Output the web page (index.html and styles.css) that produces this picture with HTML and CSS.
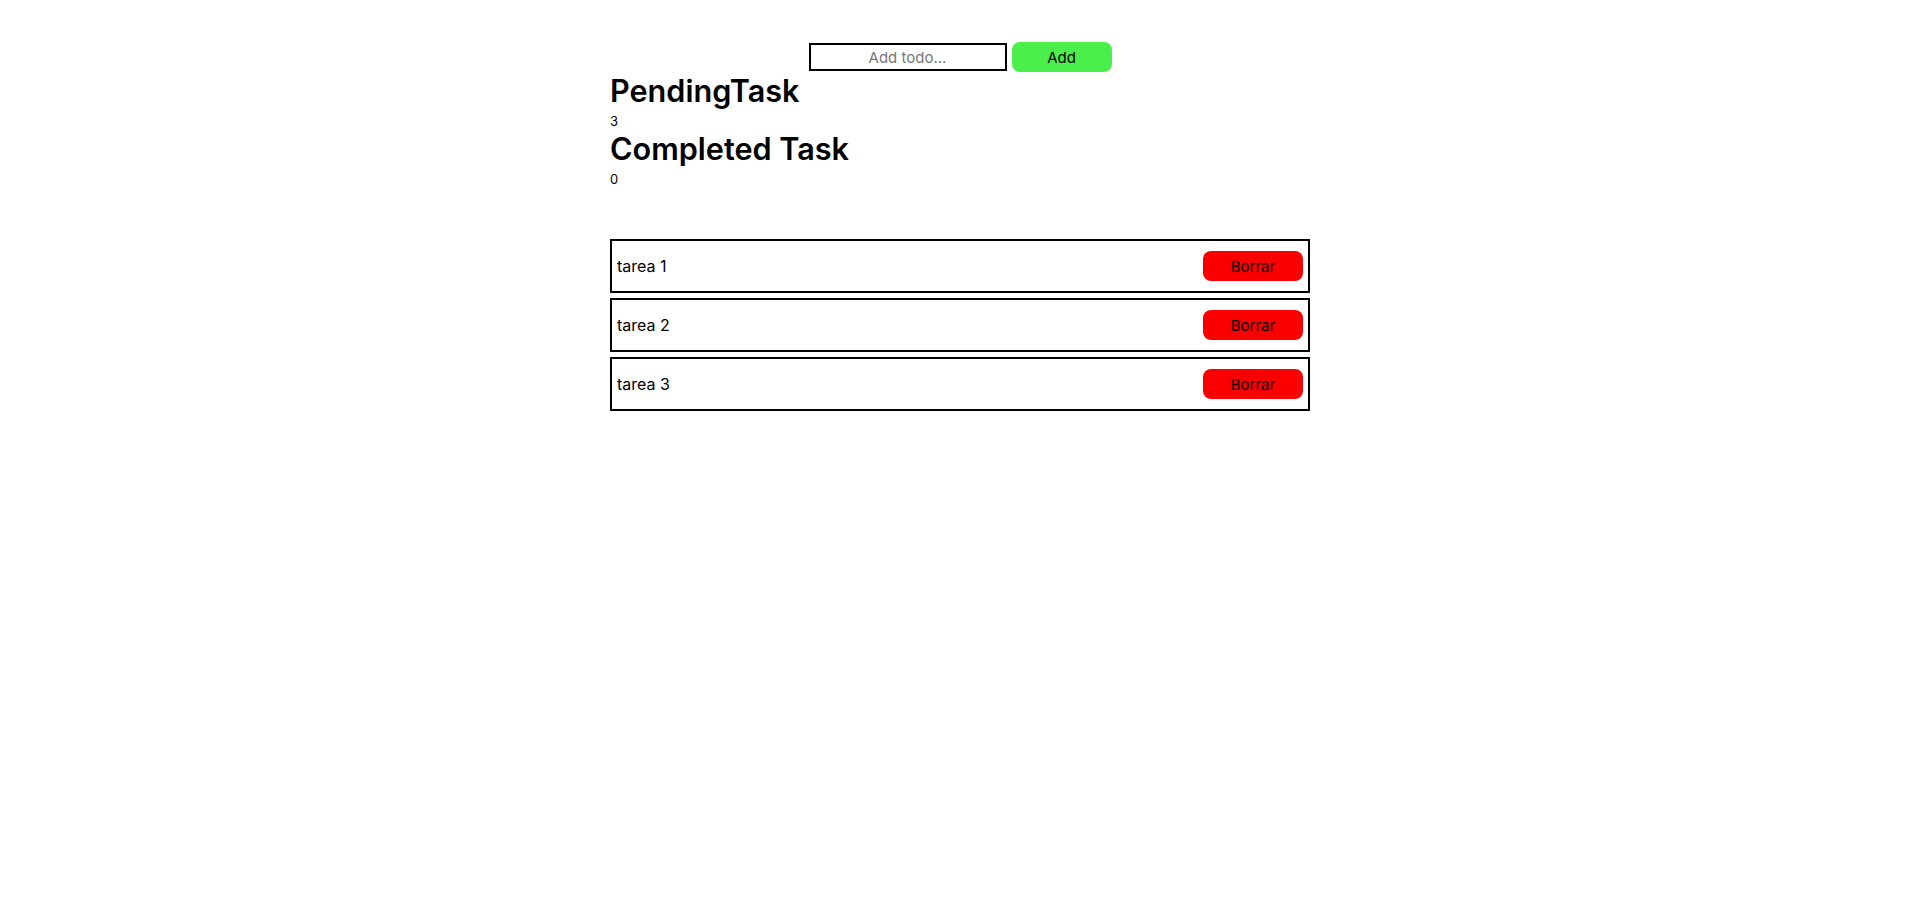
FILE: index.html
```html
<!DOCTYPE html>
<html lang="es">
<head>
<meta charset="utf-8">
<title>Todo</title>
<link rel="stylesheet" href="styles.css">
</head>
<body>
<div class="app">
  <form class="todo-form">
    <input class="todo-input" type="text" placeholder="Add todo...">
    <button class="btn-add" type="button">Add</button>
  </form>
  <h1 class="stat-title">PendingTask</h1>
  <p class="stat-value">3</p>
  <h1 class="stat-title">Completed Task</h1>
  <p class="stat-value">0</p>
  <ul class="todo-list">
    <li class="todo-item"><span class="todo-text">tarea 1</span><button class="btn-delete" type="button">Borrar</button></li>
    <li class="todo-item"><span class="todo-text">tarea 2</span><button class="btn-delete" type="button">Borrar</button></li>
    <li class="todo-item"><span class="todo-text">tarea 3</span><button class="btn-delete" type="button">Borrar</button></li>
  </ul>
</div>
</body>
</html>
```
FILE: styles.css
```css
html, body {
  margin: 0;
  padding: 0;
  background: #fff;
  color: #000;
  font-family: "Inter", "Noto Sans", "DejaVu Sans", sans-serif;
}

.app {
  width: 700px;
  margin: 0 auto;
}

.todo-form {
  display: flex;
  justify-content: center;
  align-items: center;
  gap: 5px;
  padding-top: 42px;
  margin: 0;
}

.todo-input {
  box-sizing: border-box;
  width: 198px;
  height: 28px;
  border: 2px solid #000;
  border-radius: 0;
  padding: 0 6px;
  font-family: inherit;
  font-size: 15px;
  text-align: center;
  outline: none;
}

.todo-input::placeholder {
  color: #777;
}

.btn-add {
  width: 100px;
  height: 30px;
  border: none;
  border-radius: 8px;
  background: #4bef4b;
  color: #000;
  font-family: inherit;
  font-size: 15px;
  cursor: pointer;
}

.stat-title {
  margin: 0;
  font-size: 30.6px;
  font-weight: 600;
  line-height: 38px;
}

.stat-value {
  margin: 0;
  font-size: 13px;
  line-height: 20px;
  padding-top: 1px;
  height: 19px;
}

.todo-list {
  list-style: none;
  margin: 51px 0 0;
  padding: 0;
}

.todo-item {
  box-sizing: border-box;
  height: 54px;
  display: flex;
  align-items: center;
  justify-content: space-between;
  border: 2px solid #000;
  padding: 0 5px;
  margin-bottom: 5px;
  font-size: 16px;
}

.btn-delete {
  width: 100px;
  height: 30px;
  border: none;
  border-radius: 8px;
  background: #fa0000;
  color: #000;
  font-family: inherit;
  font-size: 15px;
  cursor: pointer;
}
```
